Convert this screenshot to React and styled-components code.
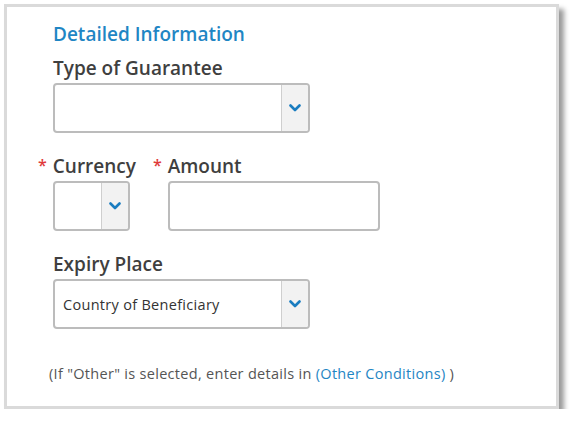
import React from 'react';
import styled, { createGlobalStyle } from 'styled-components';

const GlobalStyle = createGlobalStyle`
  html, body {
    margin: 0;
    padding: 0;
    background: #ffffff;
  }
  body {
    font-family: 'Open Sans', 'Liberation Sans', sans-serif;
  }
`;

const Frame = styled.div`
  margin: 4px 0 0 4px;
  width: 555px;
  height: 405px;
  box-sizing: border-box;
  border: 3px solid #dadada;
  background: #fff;
  box-shadow: 5px 5px 5px rgba(0, 0, 0, 0.4);
  padding: 15px 0 0 46px;
`;

const Heading = styled.h2`
  margin: 0;
  font-size: 19px;
  line-height: 24px;
  font-weight: 600;
  color: #1f86c4;
`;

const Group = styled.div`
  display: flex;
  flex-direction: column;
  margin-top: ${({ $top }) => $top}px;
`;

const Label = styled.label`
  display: block;
  font-size: 19px;
  line-height: 22px;
  font-weight: 600;
  color: #3f3f3f;
  margin-bottom: 4px;
  white-space: nowrap;
`;

const Required = styled.span`
  color: #e03a3a;
  font-size: 16px;
  vertical-align: 2px;
  margin-left: -15px;
  margin-right: 6px;
`;

const Row = styled.div`
  display: flex;
  gap: 32px;
`;

const Box = styled.div`
  display: flex;
  width: ${({ $w }) => $w}px;
  height: 50px;
  box-sizing: border-box;
  border: 2px solid #bcbcbc;
  border-radius: 4px;
  overflow: hidden;
  background: #fff;
`;

const Value = styled.div`
  flex: 1;
  display: flex;
  align-items: center;
  padding-left: 8px;
  font-size: 14.5px;
  letter-spacing: 0.3px;
  color: #333;
`;

const Toggle = styled.div`
  width: 26px;
  display: flex;
  align-items: center;
  justify-content: center;
  background: #f2f2f2;
  border-left: 1px solid #cfcfcf;
`;

const Note = styled.p`
  margin: 35px 0 0 -4px;
  font-size: 14.5px;
  letter-spacing: 0.3px;
  color: #555;
`;

const Link = styled.a`
  color: #1f86c4;
  text-decoration: none;
`;

const Chevron = () => (
  <svg width="12" height="8" viewBox="0 0 12 8">
    <path d="M1.5 1.5 L6 6 L10.5 1.5" fill="none" stroke="#1a7dc0" strokeWidth="2.6" strokeLinecap="round" strokeLinejoin="round" />
  </svg>
);

const Select = ({ width, value }) => (
  <Box $w={width}>
    <Value>{value}</Value>
    <Toggle>
      <Chevron />
    </Toggle>
  </Box>
);

const App = () => (
  <>
    <GlobalStyle />
    <Frame>
      <Heading>Detailed Information</Heading>
      <Group $top={11}>
        <Label>Type of Guarantee</Label>
        <Select width={257} />
      </Group>
      <Row>
        <Group $top={21}>
          <Label><Required>*</Required>Currency</Label>
          <Select width={77} />
        </Group>
        <Group $top={21}>
          <Label><Required>*</Required>Amount</Label>
          <Box $w={212} />
        </Group>
      </Row>
      <Group $top={22}>
        <Label>Expiry Place</Label>
        <Select width={257} value="Country of Beneficiary" />
      </Group>
      <Note>
        (If "Other" is selected, enter details in <Link href="#">(Other Conditions)</Link> )
      </Note>
    </Frame>
  </>
);

export default App;
